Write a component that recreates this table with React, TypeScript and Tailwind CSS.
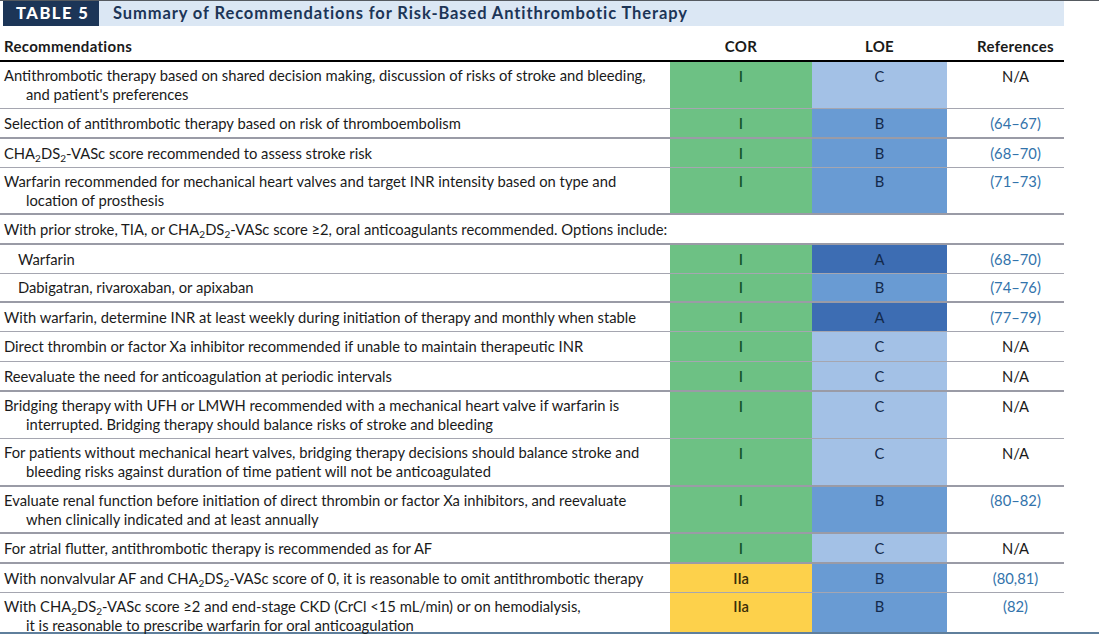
import type { ReactNode } from "react";

type Row = {
  lines: ReactNode[];
  cor?: string;
  loe?: string;
  refs?: string;
  indent?: boolean;
  h: string;
  thick?: boolean;
  top?: boolean;
};

function Cha() {
  return (
    <>
      CHA<span className="relative top-[3px] text-[10px] leading-none">2</span>DS
      <span className="relative top-[3px] text-[10px] leading-none">2</span>-VASc
    </>
  );
}

const loeBg: Record<string, string> = {
  A: "bg-[#3d6db3]",
  B: "bg-[#699bd3]",
  C: "bg-[#a3c1e6]",
};

const rows: Row[] = [
  {
    lines: [
      "Antithrombotic therapy based on shared decision making, discussion of risks of stroke and bleeding,",
      "and patient's preferences",
    ],
    cor: "I",
    loe: "C",
    refs: "N/A",
    h: "h-[46px]",
  },
  {
    lines: ["Selection of antithrombotic therapy based on risk of thromboembolism"],
    cor: "I",
    loe: "B",
    refs: "(64–67)",
    h: "h-[28px]",
    thick: true,
  },
  {
    lines: [
      <>
        <Cha /> score recommended to assess stroke risk
      </>,
    ],
    cor: "I",
    loe: "B",
    refs: "(68–70)",
    h: "h-[28px]",
  },
  {
    lines: [
      "Warfarin recommended for mechanical heart valves and target INR intensity based on type and",
      "location of prosthesis",
    ],
    cor: "I",
    loe: "B",
    refs: "(71–73)",
    h: "h-[45px]",
    thick: true,
  },
  {
    lines: [
      <>
        With prior stroke, TIA, or <Cha /> score ≥2, oral anticoagulants recommended. Options include:
      </>,
    ],
    h: "h-[28px]",
    thick: true,
  },
  {
    lines: ["Warfarin"],
    cor: "I",
    loe: "A",
    refs: "(68–70)",
    indent: true,
    h: "h-[28px]",
  },
  {
    lines: ["Dabigatran, rivaroxaban, or apixaban"],
    cor: "I",
    loe: "B",
    refs: "(74–76)",
    indent: true,
    h: "h-[27px]",
    thick: true,
  },
  {
    lines: ["With warfarin, determine INR at least weekly during initiation of therapy and monthly when stable"],
    cor: "I",
    loe: "A",
    refs: "(77–79)",
    h: "h-[28px]",
  },
  {
    lines: ["Direct thrombin or factor Xa inhibitor recommended if unable to maintain therapeutic INR"],
    cor: "I",
    loe: "C",
    refs: "N/A",
    h: "h-[29px]",
  },
  {
    lines: ["Reevaluate the need for anticoagulation at periodic intervals"],
    cor: "I",
    loe: "C",
    refs: "N/A",
    h: "h-[28px]",
    thick: true,
  },
  {
    lines: [
      "Bridging therapy with UFH or LMWH recommended with a mechanical heart valve if warfarin is",
      "interrupted. Bridging therapy should balance risks of stroke and bleeding",
    ],
    cor: "I",
    loe: "C",
    refs: "N/A",
    h: "h-[46px]",
  },
  {
    lines: [
      "For patients without mechanical heart valves, bridging therapy decisions should balance stroke and",
      "bleeding risks against duration of time patient will not be anticoagulated",
    ],
    cor: "I",
    loe: "C",
    refs: "N/A",
    h: "h-[46px]",
    thick: true,
  },
  {
    lines: [
      "Evaluate renal function before initiation of direct thrombin or factor Xa inhibitors, and reevaluate",
      "when clinically indicated and at least annually",
    ],
    cor: "I",
    loe: "B",
    refs: "(80–82)",
    h: "h-[45px]",
    thick: true,
  },
  {
    lines: ["For atrial flutter, antithrombotic therapy is recommended as for AF"],
    cor: "I",
    loe: "C",
    refs: "N/A",
    h: "h-[28px]",
    thick: true,
  },
  {
    lines: [
      <>
        With nonvalvular AF and <Cha /> score of 0, it is reasonable to omit antithrombotic therapy
      </>,
    ],
    cor: "IIa",
    loe: "B",
    refs: "(80,81)",
    h: "h-[28px]",
  },
  {
    lines: [
      <>
        With <Cha /> score ≥2 and end-stage CKD (CrCl &lt;15 mL/min) or on hemodialysis,
      </>,
      "it is reasonable to prescribe warfarin for oral anticoagulation",
    ],
    cor: "IIa",
    loe: "B",
    refs: "(82)",
    h: "h-[39px]",
    top: true,
  },
];

function TableRow({ row, last }: { row: Row; last: boolean }) {
  const border = last
    ? ""
    : row.thick
      ? "border-b-2 border-[#9a9ba6]"
      : "border-b border-[#a5a6b0]";
  const lift = row.top ? "" : row.lines.length > 1 ? "-mt-[18px]" : "";
  const align = row.top ? "items-start pt-[4px]" : "items-center";
  return (
    <div className={`grid grid-cols-[670px_142px_135px_117px] ${border}`}>
      <div
        className={`${row.h} flex flex-col leading-[19px] ${row.top ? "justify-start pt-[4px]" : "justify-center"} ${row.indent ? "pl-[18px]" : "pl-[4px]"}`}
      >
        {row.lines.map((l, i) => (
          <div key={i} className={i > 0 ? "pl-[22px]" : ""}>
            {l}
          </div>
        ))}
      </div>
      {row.cor ? (
        <div
          className={`flex ${align} justify-center leading-[19px] font-semibold ${row.cor === "I" ? "bg-[#6dc184] text-[#14532a]" : "bg-[#fdd14b] text-[#3a2e08]"}`}
        >
          <span className={lift}>{row.cor}</span>
        </div>
      ) : (
        <div />
      )}
      {row.loe ? (
        <div className={`flex ${align} justify-center leading-[19px] text-[#13294a] ${loeBg[row.loe]}`}>
          <span className={lift}>{row.loe}</span>
        </div>
      ) : (
        <div />
      )}
      <div
        className={`flex ${align} justify-center leading-[19px] pl-[20px] ${row.refs === "N/A" ? "text-[#1a1a1a]" : "text-[#3273ab]"}`}
      >
        <span className={lift}>{row.refs}</span>
      </div>
    </div>
  );
}

export default function App() {
  return (
    <div className="w-[1099px] h-[634px] overflow-hidden bg-white text-[#1a1a1a] font-['Lato',sans-serif] text-[14.75px]">
      <div className="h-px bg-[#555a60]" />
      <div className="w-[1064px]">
        <div className="flex h-[25px]">
          <div className="ml-[3px] w-[96px] bg-[#1c3557] text-white font-black tracking-[1.5px] text-[16.5px] flex items-center pl-[13px]">
            TABLE 5
          </div>
          <div className="flex-1 bg-[#dbe7f4] text-[#1c3557] font-bold text-[16.5px] tracking-[0.9px] flex items-center pl-[14px]">
            Summary of Recommendations for Risk-Based Antithrombotic Therapy
          </div>
        </div>
        <div className="grid grid-cols-[670px_142px_135px_117px] h-[36px] pt-[6px] items-center font-bold text-[15px] tracking-[0.3px] border-b-2 border-black">
          <div className="pl-[4px]">Recommendations</div>
          <div className="text-center">COR</div>
          <div className="text-center">LOE</div>
          <div className="text-center pl-[20px]">References</div>
        </div>
        {rows.map((r, i) => (
          <TableRow key={i} row={r} last={i === rows.length - 1} />
        ))}
      </div>
      <div className="h-[2px] bg-[#5f7f9c]" />
    </div>
  );
}
